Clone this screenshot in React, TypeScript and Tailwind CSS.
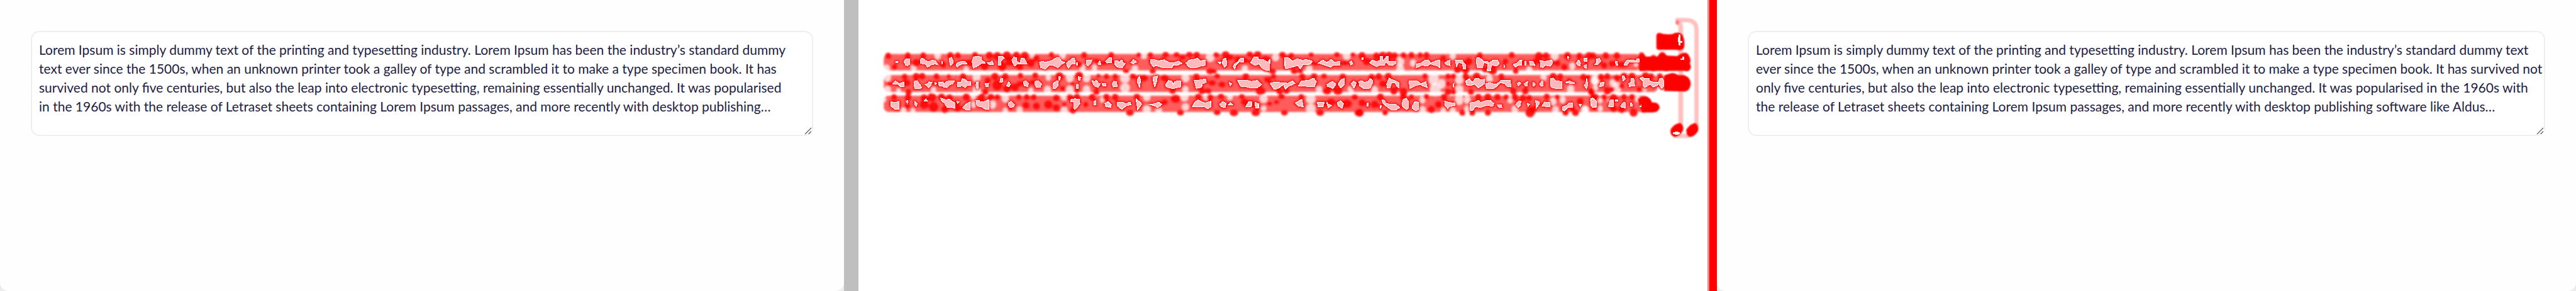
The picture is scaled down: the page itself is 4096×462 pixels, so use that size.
const SHORT_TEXT = [
  "Lorem Ipsum is simply dummy text of the printing and typesetting industry. Lorem Ipsum has been the industry’s standard dummy",
  "text ever since the 1500s, when an unknown printer took a galley of type and scrambled it to make a type specimen book. It has",
  "survived not only five centuries, but also the leap into electronic typesetting, remaining essentially unchanged. It was popularised",
  "in the 1960s with the release of Letraset sheets containing Lorem Ipsum passages, and more recently with desktop publishing…",
].join("\n");

const LONG_TEXT = [
  "Lorem Ipsum is simply dummy text of the printing and typesetting industry. Lorem Ipsum has been the industry’s standard dummy text",
  "ever since the 1500s, when an unknown printer took a galley of type and scrambled it to make a type specimen book. It has survived not",
  "only five centuries, but also the leap into electronic typesetting, remaining essentially unchanged. It was popularised in the 1960s with",
  "the release of Letraset sheets containing Lorem Ipsum passages, and more recently with desktop publishing software like Aldus…",
].join("\n");

function Snapshot({ label, text }: { label: string; text: string }) {
  return (
    <section className="bg-[#ededed]">
      <div className="h-full rounded-b-[14px] bg-[#fefefe] px-[49px] pt-[49px]">
        <div className="relative">
          <textarea
            aria-label={label}
            defaultValue={text}
            spellCheck={false}
            className="block h-[167px] w-full resize-none overflow-hidden rounded-[14px] border-2 border-[#efefef] bg-white px-[11px] py-[13px] font-['Lato',sans-serif] text-[21px] leading-[30px] font-normal whitespace-pre text-[#1e2142] outline-none"
          />
          <svg
            viewBox="0 0 12 12"
            className="pointer-events-none absolute right-[2px] bottom-[2px] size-3 bg-white"
            fill="none"
            stroke="#5c5c5c"
            strokeWidth="1.2"
            aria-hidden="true"
          >
            <path d="M1 11 L11 1 M6.5 11 L11 6.5" />
          </svg>
        </div>
      </div>
    </section>
  );
}

type Region = {
  x: number;
  y: number;
  sx: number;
  /** hot spots: x, y, radius */
  dots: number[][];
  /** faint spots: x, y, radius */
  gaps: number[][];
  cells: string[];
};

/* Each region is drawn on its own grid and scaled into the heat map. */
const REGIONS: Region[] = [
  {
    x: 1840,
    y: 95,
    sx: 1 / 3,
    dots: [
      [55, 66, 20], [178, 64, 20], [275, 64, 20], [445, 64, 22], [492, 64, 20], [600, 62, 20], [690, 64, 24], [740, 70, 28], [800, 66, 28], [860, 64, 24],
      [912, 66, 26], [1080, 60, 18], [1285, 62, 20], [1455, 62, 20], [95, 135, 18], [230, 108, 26], [400, 120, 22], [560, 110, 24], [660, 130, 26], [770, 130, 30],
      [820, 100, 30], [880, 132, 24], [950, 110, 28], [985, 80, 22], [1255, 120, 20], [1360, 95, 16], [1410, 110, 16],
      [158, 198, 20], [182, 290, 20], [230, 194, 22], [268, 194, 22], [358, 196, 20], [435, 195, 14], [525, 196, 22], [175, 235, 22], [60, 240, 14], [680, 220, 22],
      [665, 290, 20], [725, 196, 24], [790, 196, 22], [740, 250, 34], [800, 270, 26], [850, 262, 26], [880, 240, 20], [885, 190, 18], [978, 190, 20], [960, 230, 18],
      [1130, 196, 28], [1150, 270, 18], [1255, 192, 28], [1240, 280, 18], [1210, 240, 14], [1362, 290, 20], [1375, 192, 14], [1425, 196, 18], [1480, 196, 18],
      [92, 325, 20], [180, 325, 22], [175, 380, 20], [280, 330, 24], [330, 325, 28], [390, 325, 24], [440, 330, 24], [280, 370, 30], [340, 385, 32], [545, 325, 24],
      [410, 400, 24], [490, 390, 26], [640, 325, 24], [700, 325, 22], [740, 325, 18], [820, 390, 18], [875, 325, 18], [925, 325, 20], [968, 325, 20], [920, 375, 24],
      [985, 380, 24], [1060, 370, 28], [1110, 330, 22], [1110, 390, 24], [1160, 370, 14], [1195, 325, 22], [1240, 325, 22], [1215, 405, 22], [1295, 370, 18], [1335, 325, 22], [1425, 325, 22], [1480, 325, 22],
    ],
    gaps: [
      [45, 145, 20], [215, 140, 18], [365, 62, 20], [545, 150, 16], [960, 60, 16], [1150, 60, 20], [1275, 140, 18], [1350, 140, 16], [50, 200, 22], [50, 280, 22], [120, 285, 14],
      [340, 280, 16], [610, 200, 24], [610, 280, 24], [950, 285, 16], [1055, 280, 22], [1060, 200, 16], [1195, 200, 24], [1195, 280, 24], [1300, 200, 24], [1300, 280, 24], [150, 410, 18],
      [210, 410, 14], [590, 370, 16], [590, 320, 14], [710, 370, 22], [790, 330, 22], [880, 405, 18], [1160, 320, 20], [1160, 410, 22], [1400, 340, 14], [790, 410, 16], [30, 340, 12],
    ],
    cells: [
      "103,101 118,101 113,108 104,108", "152,106 164,86 190,86 190,118 178,127 164,124 158,110", "256,92 268,79 281,84 288,95 310,101 335,91 352,98 368,121 345,116 320,124 302,137 290,118 256,112",
      "390,100 396,100 396,115 390,115", "439,82 452,73 463,94 463,112 448,127 441,112", "480,118 494,106 520,98 536,98 550,115 510,118 488,136", "580,100 590,74 610,67 638,72 640,88 664,110 640,112 612,132 588,142 582,106",
      "676,108 694,106 706,98 716,118 692,121", "748,67 772,67 784,80 762,98 762,124 748,124", "830,92 842,73 862,76 860,98 884,110 888,82 910,80 926,115 868,115 848,130", "1004,106 1024,98 1040,106 1080,95 1108,78 1130,78 1142,100 1165,106 1146,116 1120,140 1088,122 1064,124 1042,148 1012,138",
      "1172,112 1192,96 1208,80 1226,82 1228,114 1206,118 1186,142", "1236,106 1246,106 1246,126 1236,122", "1298,92 1334,90 1328,110 1310,128 1300,120", "1372,110 1384,96 1390,118 1374,118", "1418,100 1444,74 1458,78 1456,108 1430,110",
      "82,240 100,222 116,232 124,240 156,228 154,258 132,258 118,244", "218,225 236,220 256,248 266,266 240,271 220,271", "286,245 304,238 312,228 330,230 322,252 308,264", "348,230 358,238 350,246", "372,230 400,228 404,242 420,226 445,222 470,224 460,240 440,248 425,264 404,262 396,252 374,254",
      "490,230 514,228 520,208 538,214 550,225 572,225 575,248 552,252 538,266 518,250 510,258 490,258", "608,230 620,228 622,262 612,272 606,250", "664,240 686,236 684,256 668,258", "762,204 774,208 772,230 754,232", "798,254 810,228 822,242 814,258", "904,226 920,222 936,238 930,260 908,250",
      "976,225 1000,222 1018,240 1010,262 984,262 976,244", "1092,238 1108,224 1124,222 1122,254 1104,272 1092,270", "1126,195 1138,197 1134,212 1128,218", "1250,196 1264,198 1258,220 1248,216", "1238,245 1246,242 1248,270 1238,270", "1336,220 1350,226 1362,218 1376,236 1388,240 1372,262 1352,256 1338,236", "1396,236 1424,240 1420,256 1404,254", "1460,240 1472,224 1490,226 1492,258 1468,260",
      "70,352 96,358 124,350 124,402 96,400 70,378", "168,348 180,344 174,364", "220,350 236,364 234,382 222,374", "280,348 292,334 302,348", "385,330 418,340 442,336 456,352 474,360 474,394 450,386 424,388 408,362 386,342", "484,348 500,354 490,364", "522,388 546,366 568,354 568,402 540,402",
      "606,345 628,346 632,354 664,350 686,340 686,402 664,400 648,388 612,378", "808,362 826,350 840,362 850,372 838,386 820,388 808,372", "1200,340 1226,334 1256,338 1258,364 1240,390 1226,402 1218,390 1222,354 1200,352", "1348,348 1358,346 1358,374 1348,372", "1416,370 1436,352 1456,370 1452,388 1420,382",
    ],
  },
  {
    x: 2300,
    y: 80,
    sx: 650 / 1568,
    dots: [
      [200, 105, 14], [258, 105, 16], [335, 104, 18], [390, 104, 16], [455, 104, 18], [492, 104, 18], [590, 105, 16], [638, 102, 20], [760, 102, 18], [800, 102, 20], [925, 104, 18], [970, 108, 16], [1070, 104, 14], [1200, 104, 16], [1280, 104, 14],
      [135, 206, 16], [270, 206, 16], [560, 206, 20], [580, 206, 14], [875, 206, 18], [985, 206, 18], [1015, 206, 14], [320, 140, 20], [420, 120, 18], [700, 130, 20], [840, 130, 22], [1240, 155, 18], [660, 120, 20], [740, 140, 18], [1090, 160, 14],
      [170, 240, 18], [225, 250, 22], [330, 250, 22], [370, 330, 18], [490, 240, 18], [595, 238, 16], [520, 330, 20], [550, 330, 18], [570, 280, 20], [620, 290, 20], [740, 238, 18], [815, 330, 26], [850, 260, 20], [880, 240, 16], [910, 332, 18], [945, 330, 18],
      [1025, 240, 18], [1085, 238, 18], [1135, 238, 16], [1150, 330, 22], [1205, 330, 24], [1230, 240, 18], [155, 466, 20], [190, 366, 18], [385, 380, 26], [410, 466, 18], [330, 400, 18], [500, 366, 18], [560, 370, 18], [615, 366, 18], [595, 464, 18],
      [680, 466, 22], [720, 366, 16], [790, 466, 22], [735, 400, 22], [860, 410, 14], [935, 466, 18], [920, 366, 18], [895, 400, 14], [1020, 366, 16], [1115, 466, 20], [1170, 400, 24], [1250, 410, 28], [1310, 466, 22], [1290, 370, 18],
    ],
    gaps: [
      [180, 190, 16], [225, 110, 16], [560, 120, 22], [890, 120, 18], [735, 190, 16], [1060, 190, 16], [1250, 110, 20], [130, 250, 24], [130, 310, 24], [435, 250, 20], [435, 320, 16], [1110, 320, 16], [240, 370, 18], [240, 445, 20], [430, 370, 20], [435, 430, 18],
      [540, 370, 14], [830, 380, 20], [830, 440, 14], [1068, 380, 24], [1068, 440, 24], [300, 450, 16], [1270, 320, 16], [660, 370, 14],
    ],
    cells: [
      "78,142 94,142 98,150 114,136 120,154 132,156 116,184 94,182 80,164", "158,152 172,134 188,148 172,160", "258,134 276,132 300,142 328,134 348,150 376,154 400,142 418,158 392,170 374,166 368,184 324,186 286,170 274,180 258,152", "436,156 456,136 480,132 494,124 510,140 536,138 536,170 516,172 486,186 456,182",
      "600,150 616,148 610,160", "624,132 640,124 644,168 632,180 622,158", "676,178 682,162 698,150 712,126 730,124 728,150 708,146 690,168 684,192", "764,152 782,116 800,116 804,132 826,132 850,150 862,130 858,202 836,198 818,182 808,160 786,170", "936,122 954,120 974,144 996,130 1014,132 1026,140 1044,132 1076,144 1066,162 1028,166 1014,192 1002,170 960,186 938,188",
      "1106,156 1128,136 1150,152 1170,132 1184,148 1214,146 1214,170 1186,168 1168,180 1134,166", "1264,150 1272,142 1280,160 1270,166", "192,258 202,238 208,262 204,308 194,280", "272,244 294,236 290,268 280,305 274,270", "336,290 350,264 366,270 374,288 382,270 412,266 412,304 370,316 338,304",
      "480,264 518,260 536,254 540,276 520,286 516,308 490,314", "656,276 668,284 662,298", "698,262 740,262 768,270 800,264 820,290 798,310 768,312 740,304 716,304", "862,282 888,274 918,278 952,282 976,268 988,284 956,300 940,320 930,290 902,316 882,318", "1006,298 1020,268 1060,262 1082,250 1096,270 1086,304",
      "1150,290 1176,270 1196,286 1180,314 1152,302", "1206,288 1222,258 1238,252 1236,290 1220,312", "1272,286 1284,268 1298,280 1286,312", "28,410 42,398 60,416 46,432", "90,400 122,402 134,410 156,400 160,416 138,422 114,446 92,424", "186,380 204,398 214,412 194,448", "256,414 284,410 300,400 316,414 296,434 280,424",
      "470,430 482,400 500,386 518,398 534,406 562,394 564,428 548,442 530,428", "608,412 624,396 640,406 636,434 616,430", "652,416 662,402 674,416", "740,428 754,398 770,396 768,428", "786,402 804,410 804,438 790,436", "990,406 1022,382 1030,430 1006,424", "1102,402 1136,400 1130,430 1104,430", "1148,400 1158,414 1174,420 1156,436", "1202,404 1218,392 1234,410 1226,438 1206,424",
    ],
  },
  {
    x: 2840,
    y: 95,
    sx: 1 / 3,
    dots: [
      [30, 66, 24], [60, 100, 26], [120, 66, 22], [160, 66, 26], [200, 66, 26], [235, 66, 22], [290, 64, 20], [340, 62, 20], [395, 62, 18], [435, 62, 20], [450, 110, 22], [540, 80, 20], [630, 150, 24], [680, 150, 26], [700, 100, 26], [770, 64, 20], [850, 156, 28], [800, 150, 18],
      [970, 62, 20], [995, 160, 18], [930, 100, 20], [1140, 68, 26], [1185, 66, 22], [1120, 100, 22], [1255, 110, 22], [1320, 66, 24], [1300, 135, 22], [1395, 66, 20], [1455, 66, 24], [1480, 66, 22], [90, 200, 22], [135, 196, 22], [195, 196, 24], [230, 284, 24], [290, 290, 26],
      [160, 240, 24], [425, 194, 18], [570, 195, 18], [605, 195, 18], [570, 290, 22], [605, 290, 18], [570, 240, 16], [680, 196, 22], [750, 196, 26], [714, 290, 20], [905, 196, 20], [980, 285, 22], [1055, 285, 22], [1230, 196, 24], [1275, 196, 20], [1330, 220, 18], [1420, 200, 22], [1450, 200, 16], [1470, 290, 22],
      [15, 420, 26], [30, 360, 24], [145, 325, 24], [175, 420, 18], [290, 325, 24], [340, 325, 18], [110, 370, 26], [434, 322, 18], [465, 400, 24], [510, 370, 24], [545, 325, 22], [660, 420, 20], [722, 420, 20], [820, 420, 20], [760, 325, 22], [820, 325, 24], [880, 325, 22], [935, 325, 18],
      [990, 325, 22], [1040, 330, 22], [1085, 420, 30], [1105, 400, 24], [1190, 322, 20], [1080, 330, 20], [1255, 325, 16], [1308, 420, 20], [1370, 420, 22], [1350, 395, 20], [1400, 350, 24], [1480, 325, 20],
    ],
    gaps: [
      [268, 100, 26], [270, 150, 24], [350, 110, 18], [600, 66, 18], [1240, 64, 24], [1080, 150, 18], [1350, 130, 18], [110, 280, 20], [480, 210, 32], [490, 275, 34], [530, 240, 24], [640, 210, 26], [640, 280, 26], [830, 210, 20], [1170, 200, 18], [1340, 275, 22], [1490, 220, 20], [410, 340, 18],
      [410, 405, 20], [540, 410, 16], [640, 340, 26], [690, 340, 20], [690, 400, 18], [960, 340, 18], [990, 400, 20], [1230, 350, 20], [1245, 405, 20], [1290, 340, 18], [1430, 410, 24], [600, 410, 18],
    ],
    cells: [
      "30,78 36,78 36,90 30,90", "78,108 94,92 118,100 142,96 142,68 158,68 160,94 176,82 184,68 194,68 196,100 244,98 242,112 220,126 198,122 180,104 172,122 140,124 124,134 88,116", "370,140 374,116 404,108 426,92 450,94 460,110 502,94 518,92 518,140 504,128 480,122 458,116 440,128 406,124", "548,110 566,98 582,92 584,126 566,124",
      "615,92 660,94 670,112 680,118 680,148 664,146 662,112 634,108 624,136", "746,94 752,76 770,78 792,98 818,98 828,110 850,94 880,92 892,110 878,128 842,124 838,160 816,158 820,112 796,108 786,138 754,140", "920,118 928,134 922,138", "980,120 1006,108 1018,94 1034,94 1032,122 1010,124 994,136", "1052,100 1058,100 1058,122 1052,122", "1080,100 1104,100 1116,126 1086,124", "1148,94 1180,100 1220,92 1228,110 1210,130 1180,124 1166,140 1152,134",
      "1320,68 1328,72 1324,90", "1376,108 1390,90 1402,112 1398,128 1382,122", "1424,80 1444,78 1444,100 1424,98", "1424,126 1440,118 1438,142 1426,140", "10,225 30,222 42,232 70,224 80,208 98,218 96,238 78,270 40,270 14,252", "184,244 200,204 216,214 240,222 262,234 260,268 248,254 238,234 216,236 206,264 188,264", "325,224 378,224 400,240 430,226 440,264 412,254 396,244 368,252 330,270", "600,246 608,236 604,262",
      "682,222 704,208 722,232 740,208 760,206 774,216 798,212 800,240 778,254 762,266 738,242 710,252 684,246", "806,240 832,234 868,244 886,234 902,218 962,218 964,260 940,258 926,238 898,234 874,256 858,270 810,268", "1004,238 1014,228 1028,238 1012,254", "1048,240 1070,226 1068,254 1054,252", "1102,230 1118,240 1112,256 1102,252", "1146,242 1158,222 1168,226 1168,252 1150,252", "1214,206 1232,204 1250,222 1284,226 1284,268 1250,270 1216,262", "1308,232 1332,222 1366,236 1340,238",
      "1424,248 1436,238 1440,204 1448,244 1440,272", "62,364 70,360 70,382 62,382", "154,340 172,344 178,360 206,370 240,368 268,390 246,402 212,402 184,382 162,362", "142,376 152,378 146,394", "280,380 286,340 306,330 322,350 322,392 312,402 294,390", "344,380 362,352 384,356 384,402 368,408 346,396", "548,348 580,358 614,360 612,376 580,380 568,396 552,376", "708,360 740,354 760,344 776,356 814,344 838,346 858,362 852,380 810,376 770,390 744,382 724,408 710,406",
      "880,374 906,372 908,388 886,386", "996,370 1010,350 1028,348 1024,374 1010,388", "1066,360 1082,368 1072,382", "1120,346 1142,352 1144,366 1124,392", "1160,380 1176,354 1208,358 1212,386", "1288,384 1314,376 1328,360 1350,360 1352,390 1320,390 1300,410 1290,404", "1392,368 1408,368 1400,384", "1468,334 1484,332 1498,352 1498,388 1466,376",
    ],
  },
  {
    x: 3260,
    y: 20,
    sx: 1 / 3,
    dots: [
      [300, 290, 22], [370, 290, 22], [290, 350, 22], [340, 340, 22], [400, 345, 22], [525, 286, 18], [530, 362, 20], [600, 300, 16], [655, 286, 20], [600, 366, 18], [680, 366, 18], [800, 290, 18], [812, 366, 18], [270, 425, 22], [310, 420, 20], [310, 508, 24], [340, 500, 16],
      [210, 510, 20], [370, 430, 22], [415, 420, 24], [465, 420, 24], [400, 480, 18], [550, 416, 24], [585, 420, 20], [640, 420, 20], [720, 420, 20], [510, 500, 18], [235, 550, 22], [230, 610, 24], [290, 550, 18], [350, 555, 26], [415, 550, 20], [465, 550, 20], [475, 645, 26], [350, 620, 24], [400, 625, 24],
    ],
    gaps: [
      [490, 340, 14], [235, 440, 26], [235, 490, 16], [370, 490, 28], [345, 460, 20], [170, 630, 22], [265, 570, 14], [265, 620, 16], [500, 560, 16], [320, 570, 10], [545, 500, 12],
    ],
    cells: [
      "228,346 244,334 244,310 262,306 270,324 250,346", "360,326 370,324 378,350 364,348", "416,342 430,320 450,316 490,320 496,308 512,308 512,328 470,330 446,330 434,350 418,350", "262,482 266,460 290,454 286,480", "402,418 416,416 424,436 410,450", "444,464 460,454 460,430 476,430 482,478 448,482", "514,430 534,422 542,434 574,430 574,446 604,456 632,456 638,434 654,428 666,446 666,482 652,494 634,468 620,476 598,486 580,470 564,476 548,488 534,480 536,450",
      "204,570 216,552 240,572 242,610 214,614", "318,604 328,568 350,566 348,610 324,610", "362,566 376,566 376,574 362,574", "392,606 412,580 424,584 422,616 400,614", "454,586 464,584 468,606 456,604",
    ],
  },
];

const LIGHT_RED = "#ff5c5c";

function HeatMap() {
  return (
    <svg
      viewBox="1796 0 1777 608"
      preserveAspectRatio="none"
      className="block h-full w-full"
      role="img"
      aria-label="Changed areas"
    >
      <defs>
        <filter id="soft" x="-5%" y="-20%" width="110%" height="140%">
          <feGaussianBlur stdDeviation="2.4" />
        </filter>
        <filter id="edge" x="-20%" y="-20%" width="140%" height="140%">
          <feGaussianBlur stdDeviation="1.4" />
        </filter>
      </defs>

      <g filter="url(#edge)" fill="none" stroke="#ffc0c0">
        <path d="M3509 40 Q3517 48 3517 60 V272" strokeWidth="10" />
        <path d="M3506 42 H3530 Q3550 43 3550 62 V262 Q3548 282 3530 284 H3502" strokeWidth="9" />
        <ellipse cx="3510" cy="47" rx="4" ry="5" fill="#ff7c7c" stroke="none" />
      </g>

      <g filter="url(#soft)">
        <rect x="1849" y="113" width="1584" height="34" rx="10" fill={LIGHT_RED} />
        <rect x="1849" y="157" width="1620" height="35" rx="10" fill={LIGHT_RED} />
        <rect x="1849" y="200" width="1600" height="34" rx="10" fill={LIGHT_RED} />
        {REGIONS.map((r) => (
          <g key={r.x} transform={`translate(${r.x} ${r.y}) scale(${r.sx} ${1 / 3})`}>
            {r.gaps.map(([x, y, size], i) => (
              <ellipse key={i} cx={x} cy={y} rx={size} ry={size * 1.25} fill="#fff" opacity="0.75" />
            ))}
            {r.dots.map(([x, y, size], i) => (
              <circle key={i} cx={x} cy={y} r={size} fill="#ff0505" opacity="0.9" />
            ))}
            {r.cells.map((points, i) => (
              <polygon key={i} points={points} fill="#ff0000" stroke="#ff0505" strokeWidth="20" strokeLinejoin="round" />
            ))}
          </g>
        ))}
      </g>

      <g filter="url(#edge)" fill="#ff0000">
        <path d="M3466 76 Q3466 68 3474 69 Q3484 73 3500 71 Q3512 65 3520 72 Q3527 85 3524 100 Q3518 107 3508 104 H3476 Q3466 106 3466 98 Z" />
        <path d="M3430 116 Q3436 109 3444 118 H3468 Q3478 107 3488 116 L3510 117 Q3524 106 3534 116 Q3540 126 3536 132 Q3542 144 3530 148 H3430 Z" />
        <path d="M3482 158 Q3500 150 3512 157 H3524 Q3538 162 3538 176 Q3536 190 3526 191 L3482 190 Z" />
        <path d="M3427 208 Q3434 200 3446 202 Q3456 206 3456 214 Q3472 213 3473 225 Q3470 235 3458 235 H3436 Z" />
        <path d="M3496 270 Q3504 258 3516 257 Q3525 262 3521 274 Q3514 285 3504 286 Q3493 282 3496 270 Z" />
        <path d="M3529 270 Q3538 258 3548 257 Q3556 264 3553 274 Q3546 285 3536 286 Q3527 282 3529 270 Z" />
      </g>

      {REGIONS.map((r) => (
        <g
          key={r.x}
          transform={`translate(${r.x} ${r.y}) scale(${r.sx} ${1 / 3})`}
          fill="#ffb8bc"
          stroke="#fff"
          strokeWidth="4"
          shapeRendering="crispEdges"
        >
          {r.cells.map((points, i) => (
            <polygon key={i} points={points} />
          ))}
        </g>
      ))}
      <g fill="#fff0f0" shapeRendering="crispEdges">
        <path d="M3513 73 H3517 V86 H3520 V90 H3517 V95 H3513 V88 H3511 V78 H3513 Z" />
        <path d="M3517 122 H3520 V119 H3524 V125 H3517 Z" />
        <path d="M3501 277 H3504 V275 H3513 V277 H3515 V280 H3512 V282 H3504 V280 H3501 Z" />
        <path d="M3431 221 H3433 V219 H3435 V224 H3431 Z" />
      </g>
    </svg>
  );
}

export default function App() {
  return (
    <main className="grid min-h-screen grid-cols-[1342fr_23px_1350fr_15px_1366fr] bg-white">
      <Snapshot label="Description before" text={SHORT_TEXT} />
      <div className="bg-[#bfbfbf]" />
      <section className="h-[462px]">
        <HeatMap />
      </section>
      <div className="border-l-3 border-[#ff8080] bg-[#ff0000]" />
      <Snapshot label="Description after" text={LONG_TEXT} />
    </main>
  );
}
